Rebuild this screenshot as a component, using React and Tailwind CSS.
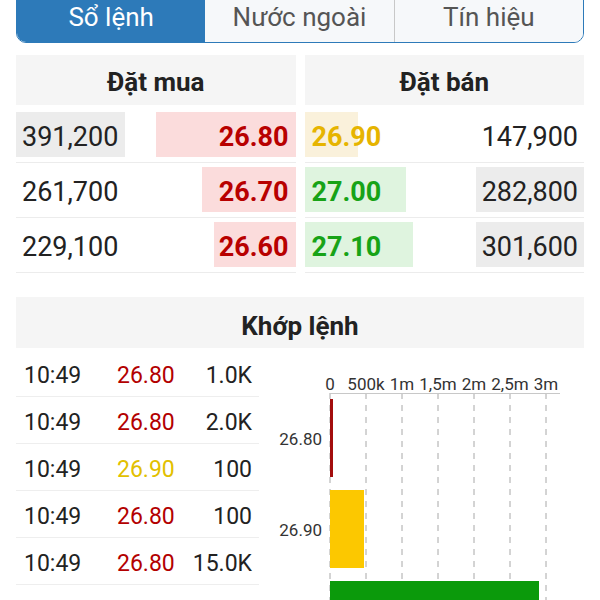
import React from 'react'

const buys = [
  { vol: '391,200', volW: 109, price: '26.80', barW: 140 },
  { vol: '261,700', volW: 0, price: '26.70', barW: 94 },
  { vol: '229,100', volW: 0, price: '26.60', barW: 82 },
]

const sells = [
  { price: '26.90', tone: 'ref', barW: 53, vol: '147,900', volW: 0 },
  { price: '27.00', tone: 'up', barW: 101, vol: '282,800', volW: 108 },
  { price: '27.10', tone: 'up', barW: 108, vol: '301,600', volW: 108 },
]

const trades = [
  { time: '10:49', price: '26.80', tone: 'down', vol: '1.0K' },
  { time: '10:49', price: '26.80', tone: 'down', vol: '2.0K' },
  { time: '10:49', price: '26.90', tone: 'ref', vol: '100' },
  { time: '10:49', price: '26.80', tone: 'down', vol: '100' },
  { time: '10:49', price: '26.80', tone: 'down', vol: '15.0K' },
  { time: '10:49', price: '26.80', tone: 'down', vol: '1.0K' },
]

const ticks = ['0', '500k', '1m', '1,5m', '2m', '2,5m', '3m']

function Tabs() {
  return (
    <div className="mx-4 -mt-[10px] flex h-[53px] overflow-hidden rounded-b-[10px] border-[1.5px] border-[#2d7ab9] pt-[2px] text-[26px]">
      <div className="-mt-[2px] flex flex-1 items-center justify-center bg-[#2d7ab9] pt-[2px] text-white">Sổ lệnh</div>
      <div className="-mt-[2px] flex flex-1 items-center justify-center bg-[#f6f8fa] pt-[2px] text-[#555]">Nước ngoài</div>
      <div className="-mt-[2px] flex flex-1 items-center justify-center border-l border-[#c8c8c8] bg-[#f6f8fa] pt-[2px] text-[#555]">Tín hiệu</div>
    </div>
  )
}

function BuySide() {
  return (
    <div>
      <div className="flex h-[50px] items-center justify-center bg-[#f5f5f5] pt-[5px] text-[26px] font-bold text-[#222]">Đặt mua</div>
      <div className="mt-[3px]">
        {buys.map((r, i) => (
          <div key={i} className="flex h-[55px] items-center justify-between border-b border-[#ececec] pb-px">
            <div className="relative flex h-[45px] items-center">
              {r.volW > 0 && <div className="absolute inset-y-0 left-0 bg-[#ececec]" style={{ width: r.volW }} />}
              <span className="relative pl-[6px] pt-[5px] text-[27px] text-[#222]">{r.vol}</span>
            </div>
            <div className="relative flex h-[45px] items-center justify-end">
              <div className="absolute inset-y-0 right-0 bg-[#fbdcdc]" style={{ width: r.barW }} />
              <span className="relative pr-[7px] pt-[5px] text-[27px] font-bold text-[#b80000]">{r.price}</span>
            </div>
          </div>
        ))}
      </div>
    </div>
  )
}

function SellSide() {
  return (
    <div>
      <div className="flex h-[50px] items-center justify-center bg-[#f5f5f5] pt-[5px] text-[26px] font-bold text-[#222]">Đặt bán</div>
      <div className="mt-[3px]">
        {sells.map((r, i) => (
          <div key={i} className="flex h-[55px] items-center justify-between border-b border-[#ececec] pb-px">
            <div className="relative flex h-[45px] items-center">
              <div
                className={`absolute inset-y-0 left-0 ${r.tone === 'ref' ? 'bg-[#faf1db]' : 'bg-[#dff4df]'}`}
                style={{ width: r.barW }}
              />
              <span className={`relative pl-[7px] pt-[5px] text-[27px] font-bold ${r.tone === 'ref' ? 'text-[#e6b400]' : 'text-[#17a317]'}`}>
                {r.price}
              </span>
            </div>
            <div className="relative flex h-[45px] items-center justify-end">
              {r.volW > 0 && <div className="absolute inset-y-0 right-0 bg-[#ececec]" style={{ width: r.volW }} />}
              <span className="relative pr-[6px] pt-[5px] text-[27px] text-[#222]">{r.vol}</span>
            </div>
          </div>
        ))}
      </div>
    </div>
  )
}

function VolumeChart() {
  // x: 0 at 71, 36px per 500k
  return (
    <svg width="325" height="260" className="block" style={{ fontFamily: 'Roboto, sans-serif' }}>
      {ticks.map((t, i) => (
        <g key={t}>
          <line x1={71 + i * 36} y1="43" x2={71 + i * 36} y2="260" stroke="#a8a8a8" strokeWidth="1" strokeDasharray="6 6" />
          <text x={71 + i * 36} y="40" textAnchor="middle" fontSize="17" fill="#333">{t}</text>
        </g>
      ))}
      <line x1="71" y1="43.5" x2="301" y2="43.5" stroke="#c8c8c8" strokeWidth="1" />
      <rect x="71" y="49" width="3" height="78" fill="#a30d0d" />
      <rect x="71" y="140" width="34" height="78" fill="#fcc800" />
      <rect x="71" y="231" width="209" height="78" fill="#0b9a0b" />
      <text x="63" y="95" textAnchor="end" fontSize="17" fill="#333">26.80</text>
      <text x="63" y="186" textAnchor="end" fontSize="17" fill="#333">26.90</text>
    </svg>
  )
}

function Matches() {
  return (
    <div className="mx-4 mt-6">
      <div className="flex h-[51px] items-center justify-center bg-[#f5f5f5] pt-[7px] text-[26px] font-bold text-[#222]">Khớp lệnh</div>
      <div className="mt-[2px] flex">
        <div className="w-[243px]">
          {trades.map((t, i) => (
            <div key={i} className="grid h-[47px] grid-cols-[93px_70px_1fr] items-center border-b border-[#eeeeee] pl-2 pr-[7px] pt-[7px] text-[23px]">
              <span className="text-[#222]">{t.time}</span>
              <span className={t.tone === 'ref' ? 'text-[#e2c000]' : 'text-[#b30000]'}>{t.price}</span>
              <span className="text-right text-[#222]">{t.vol}</span>
            </div>
          ))}
        </div>
        <div className="flex-1">
          <VolumeChart />
        </div>
      </div>
    </div>
  )
}

export default function App() {
  return (
    <div className="h-[600px] w-[600px] overflow-hidden bg-white" style={{ fontFamily: 'Roboto, "Noto Sans", sans-serif' }}>
      <Tabs />
      <div className="mx-4 mt-3 grid grid-cols-2 gap-[9px]">
        <BuySide />
        <SellSide />
      </div>
      <Matches />
    </div>
  )
}
